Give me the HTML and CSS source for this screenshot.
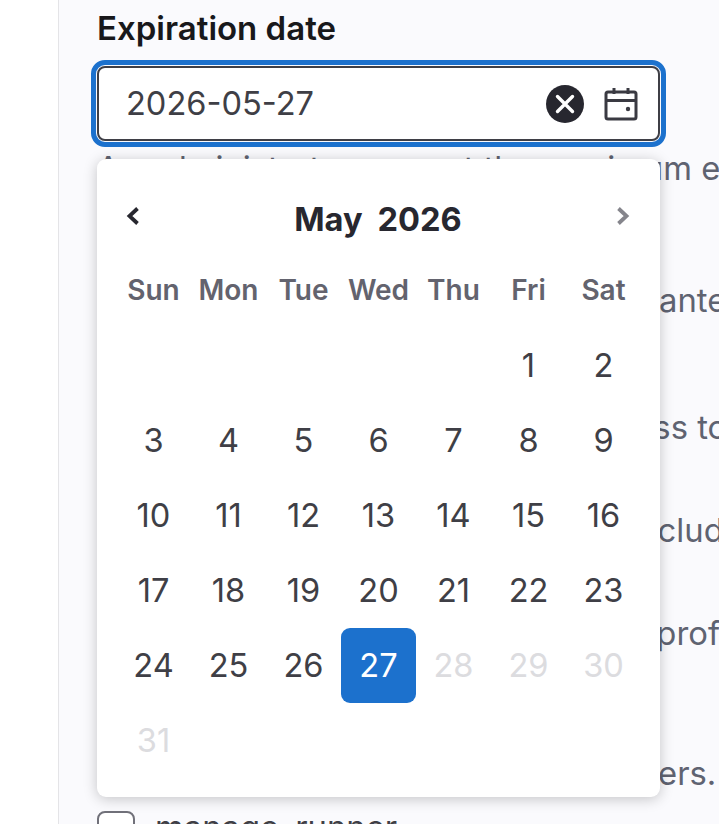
FILE: index.html
```html
<!DOCTYPE html>
<html lang="en">
<head>
    <meta charset="UTF-8">
    <title>Expiration date</title>
    <link rel="stylesheet" href="styles.css">
</head>
<body>
    <div class="page">
        <div class="side"></div>
        <div class="main">
            <div class="label">Expiration date</div>
            <div class="date-field">
                <div class="date-input">
                    <span class="date-value">2026-05-27</span>
                    <svg class="clear-icon" viewBox="0 0 38 38">
                        <circle cx="19" cy="19" r="19" fill="#27272f"/>
                        <path d="M11.5 11.5l15 15M26.5 11.5l-15 15" stroke="#fff" stroke-width="3.4" stroke-linecap="round"/>
                    </svg>
                    <svg class="calendar-icon" viewBox="0 0 34 34" fill="none" stroke="#3a3a42" stroke-width="3">
                        <rect x="2" y="5" width="30" height="27" rx="2"/>
                        <path d="M2 13.5h30M10 1v6M24 1v6"/>
                        <circle cx="24" cy="22" r="2.2" fill="#3a3a42" stroke="none"/>
                    </svg>
                </div>
                <!-- Calendar popup -->
                <div class="calendar">
                    <div class="cal-head">
                        <svg class="chevron" viewBox="0 0 14 20"><path d="M11.5 2.5L3.5 10l8 7.5" fill="none" stroke="#27272f" stroke-width="3.8"/></svg>
                        <div class="cal-title"><span>May</span><span>2026</span></div>
                        <svg class="chevron" viewBox="0 0 14 20"><path d="M2.5 2.5l8 7.5-8 7.5" fill="none" stroke="#85858c" stroke-width="3.8"/></svg>
                    </div>
                    <div class="cal-grid">
                        <div class="weekday">Sun</div>
                        <div class="weekday">Mon</div>
                        <div class="weekday">Tue</div>
                        <div class="weekday">Wed</div>
                        <div class="weekday">Thu</div>
                        <div class="weekday">Fri</div>
                        <div class="weekday">Sat</div>
                        <div class="day"></div>
                        <div class="day"></div>
                        <div class="day"></div>
                        <div class="day"></div>
                        <div class="day"></div>
                        <div class="day">1</div>
                        <div class="day">2</div>
                        <div class="day">3</div>
                        <div class="day">4</div>
                        <div class="day">5</div>
                        <div class="day">6</div>
                        <div class="day">7</div>
                        <div class="day">8</div>
                        <div class="day">9</div>
                        <div class="day">10</div>
                        <div class="day">11</div>
                        <div class="day">12</div>
                        <div class="day">13</div>
                        <div class="day">14</div>
                        <div class="day">15</div>
                        <div class="day">16</div>
                        <div class="day">17</div>
                        <div class="day">18</div>
                        <div class="day">19</div>
                        <div class="day">20</div>
                        <div class="day">21</div>
                        <div class="day">22</div>
                        <div class="day">23</div>
                        <div class="day">24</div>
                        <div class="day">25</div>
                        <div class="day">26</div>
                        <div class="day selected">27</div>
                        <div class="day muted">28</div>
                        <div class="day muted">29</div>
                        <div class="day muted">30</div>
                        <div class="day muted">31</div>
                    </div>
                </div>
            </div>
            <!-- Text under the popup -->
            <div class="help first">An administrator can set the maximum expiration date</div>
            <div class="help row-2">Grant read and write accesses, guaranteed</div>
            <div class="help row-3">Gives complete read and write access to</div>
            <div class="help row-4">Assigning all groups and projects, including</div>
            <div class="help row-5">Grants read only access to the user profile</div>
            <div class="help row-6">Grants access to the list of all the users.</div>
            <div class="check-row">
                <div class="checkbox"></div>
                <span class="check-label">manage_runner</span>
            </div>
        </div>
    </div>
</body>
</html>
```
FILE: styles.css
```css
* {
    box-sizing: border-box;
    margin: 0;
    font-family: Inter, "Liberation Sans", sans-serif;
}
body {
    height: 824px;
    overflow: hidden;
    background-color: #fff;
}
.page {
    display: flex;
    height: 824px;
    overflow: hidden;
}
.side {
    flex: 0 0 59px;
    background-color: #fff;
    border-right: 1px solid #e4e4e7;
}
.main {
    flex: 1;
    min-width: 0;
    padding: 8px 0 0 38px;
    background-color: #fafafd;
}
.label {
    font-size: 33px;
    line-height: 40px;
    font-weight: 600;
    color: #18181b;
    margin-bottom: 18px;
}
.date-field {
    position: relative;
    width: 563px;
}
.date-input {
    display: flex;
    align-items: center;
    height: 75px;
    padding: 0 20px 0 27px;
    background-color: #fff;
    border: 2.5px solid #3f3f46;
    border-radius: 8px;
    outline: 5px solid #1c71cd;
    outline-offset: 1px;
}
.date-value {
    flex: 1;
    padding-bottom: 2px;
    font-size: 32.6px;
    color: #3f3f46;
}
.clear-icon {
    width: 38px;
    height: 38px;
    margin-right: 20px;
}
.calendar-icon {
    width: 34px;
    height: 34px;
}
.calendar {
    position: absolute;
    top: 93px;
    left: 0;
    width: 563px;
    height: 638px;
    padding: 19px;
    background-color: #fff;
    border-radius: 9px;
    box-shadow: 0 2px 14px rgba(0, 0, 0, 0.22);
    z-index: 2;
}
.cal-head {
    display: flex;
    align-items: center;
    justify-content: space-between;
    height: 75px;
    padding: 0 11px 0 10px;
}
.chevron {
    width: 14px;
    height: 20px;
}
.cal-title {
    display: flex;
    gap: 15px;
    margin-top: 6px;
    font-size: 32.6px;
    font-weight: 700;
    color: #27272f;
}
.cal-grid {
    display: grid;
    grid-template-columns: repeat(7, 75px);
    grid-auto-rows: 75px;
}
.weekday,
.day {
    display: flex;
    align-items: center;
    justify-content: center;
    padding-bottom: 2px;
}
.weekday {
    font-size: 28px;
    font-weight: 600;
    color: #63636e;
}
.day {
    font-size: 32.6px;
    color: #3f3f46;
}
.day.selected {
    background-color: #1c71cd;
    color: #fff;
    border-radius: 9px;
}
.day.muted {
    color: #dcdcdf;
}
.help {
    font-size: 32.8px;
    line-height: 38px;
    color: #5f6371;
    white-space: nowrap;
}
.first {
    margin-top: 8px;
}
.row-2 {
    margin-top: 94px;
}
.row-3 {
    margin-top: 89px;
}
.row-4 {
    margin-top: 65px;
}
.row-5 {
    margin-top: 65px;
}
.row-6 {
    margin-top: 102px;
}
.check-row {
    display: flex;
    align-items: flex-start;
    gap: 20px;
    margin-top: 19px;
}
.checkbox {
    flex: 0 0 38px;
    height: 38px;
    background-color: #fff;
    border: 2px solid #71717a;
    border-radius: 8px;
}
.check-label {
    font-size: 32.8px;
    line-height: 33px;
    color: #3f3f46;
}
```
